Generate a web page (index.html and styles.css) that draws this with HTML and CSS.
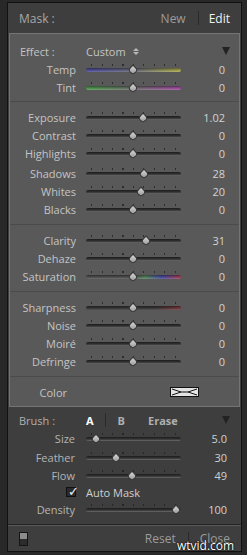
FILE: index.html
```html
<!DOCTYPE html>
<html lang="en">

<head>
    <meta charset="UTF-8">
    <meta name="viewport" content="width=device-width, initial-scale=1.0">
    <title>Mask</title>
    <link rel="stylesheet" href="styles.css">
</head>

<body>
    <div class="frame">
        <!-- 顶部 Mask 栏 -->
        <div class="head">
            <span class="head_title">Mask :</span>
            <span class="head_new">New</span>
            <span class="sep"></span>
            <span class="head_edit">Edit</span>
        </div>

        <!-- 调整面板 -->
        <div class="panel">
            <div class="group first">
                <div class="effect">
                    <span class="effect_label">Effect :</span>
                    <span class="effect_value">Custom</span>
                    <span class="updown"><i class="up"></i><i class="down"></i></span>
                    <span class="tri"></span>
                </div>
                <div class="row"><span class="lbl">Temp</span><div class="slider temp"><i class="thumb" style="left:47px"></i></div><span class="val">0</span></div>
                <div class="row"><span class="lbl">Tint</span><div class="slider tint"><i class="thumb" style="left:47px"></i></div><span class="val">0</span></div>
            </div>
            <div class="group">
                <div class="row"><span class="lbl">Exposure</span><div class="slider"><i class="thumb" style="left:57px"></i></div><span class="val">1.02</span></div>
                <div class="row"><span class="lbl">Contrast</span><div class="slider"><i class="thumb" style="left:47px"></i></div><span class="val">0</span></div>
                <div class="row"><span class="lbl">Highlights</span><div class="slider"><i class="thumb" style="left:47px"></i></div><span class="val">0</span></div>
                <div class="row gap"><span class="lbl">Shadows</span><div class="slider"><i class="thumb" style="left:58px"></i></div><span class="val">28</span></div>
                <div class="row"><span class="lbl">Whites</span><div class="slider"><i class="thumb" style="left:55px"></i></div><span class="val">20</span></div>
                <div class="row"><span class="lbl">Blacks</span><div class="slider"><i class="thumb" style="left:47px"></i></div><span class="val">0</span></div>
            </div>
            <div class="group">
                <div class="row"><span class="lbl">Clarity</span><div class="slider"><i class="thumb" style="left:60px"></i></div><span class="val">31</span></div>
                <div class="row"><span class="lbl">Dehaze</span><div class="slider"><i class="thumb" style="left:47px"></i></div><span class="val">0</span></div>
                <div class="row"><span class="lbl">Saturation</span><div class="slider sat"><i class="thumb" style="left:47px"></i></div><span class="val">0</span></div>
            </div>
            <div class="group">
                <div class="row"><span class="lbl">Sharpness</span><div class="slider sharp"><i class="thumb" style="left:47px"></i></div><span class="val">0</span></div>
                <div class="row"><span class="lbl">Noise</span><div class="slider"><i class="thumb" style="left:47px"></i></div><span class="val">0</span></div>
                <div class="row"><span class="lbl">Moiré</span><div class="slider"><i class="thumb" style="left:47px"></i></div><span class="val">0</span></div>
                <div class="row"><span class="lbl">Defringe</span><div class="slider"><i class="thumb" style="left:47px"></i></div><span class="val">0</span></div>
            </div>
            <div class="group last">
                <div class="row">
                    <span class="lbl color_lbl">Color</span>
                    <svg class="swatch" width="29" height="10" viewBox="0 0 29 10">
                        <rect x="0.5" y="0.5" width="28" height="9" fill="#e4e4e4" stroke="#111" />
                        <path d="M2 2 L11 5 L18 5 L27 2 M2 8 L11 5 M18 5 L27 8" fill="none" stroke="#111" stroke-width="1" />
                    </svg>
                </div>
            </div>
        </div>

        <!-- 画笔 -->
        <div class="brush">
            <div class="brush_head">
                <span class="brush_title">Brush :</span>
                <span class="brush_a">A</span>
                <span class="sep"></span>
                <span class="brush_b">B</span>
                <span class="brush_erase">Erase</span>
                <span class="tri"></span>
            </div>
            <div class="row"><span class="lbl">Size</span><div class="slider"><i class="thumb" style="left:10px"></i></div><span class="val">5.0</span></div>
            <div class="row feather"><span class="lbl">Feather</span><div class="slider"><i class="thumb" style="left:30px"></i></div><span class="val">30</span></div>
            <div class="row"><span class="lbl">Flow</span><div class="slider"><i class="thumb" style="left:46px"></i></div><span class="val">49</span></div>
            <div class="automask">
                <span class="check">&#10003;</span>
                <span>Auto Mask</span>
            </div>
            <div class="row"><span class="lbl">Density</span><div class="slider"><i class="thumb" style="left:90px"></i></div><span class="val">100</span></div>
        </div>

        <!-- 底部 -->
        <div class="foot">
            <span class="toggle"></span>
            <span class="foot_reset">Reset</span>
            <span class="sep"></span>
            <span class="foot_close">Close</span>
        </div>
        <div class="mark">wtvid.com</div>
    </div>
</body>

</html>
```

FILE: styles.css
```css
* {
    margin: 0;
    padding: 0;
    box-sizing: border-box;
}

body {
    background-color: #282828;
    font-family: "Open Sans", "Liberation Sans", sans-serif;
    font-size: 11px;
    color: #c4c4c4;
}

.frame {
    position: relative;
    margin: 2px 5px 0 7px;
    width: 235px;
    height: 550px;
    border: 1px solid #111;
    background-color: #3e3e3e;
}

/* 顶部 */
.head {
    display: flex;
    align-items: center;
    height: 30px;
    padding: 0 11px;
    font-size: 12px;
}

.head_title {
    color: #a8a8a8;
    flex: 1;
}

.head_new {
    color: #9c9c9c;
}

.head_edit {
    color: #f2f2f2;
}

.sep {
    width: 1px;
    height: 14px;
    margin: 0 10px 0 12px;
    background-color: #2a2a2a;
}

/* 面板 */
.panel {
    margin: 0 1px;
    border: 1px solid #747474;
    background-color: #595959;
}

.group {
    padding: 6px 0;
    border-bottom: 1px solid #4b4b4b;
}

.group.first {
    padding: 8px 0 5px;
}

.group.last {
    padding: 6px 0 5px;
    border-bottom: none;
}

.effect {
    display: flex;
    align-items: center;
    height: 18px;
    padding: 0 9px 0 10px;
}

.effect_label {
    width: 66px;
}

.effect_value {
    color: #c4c4c4;
}

.updown {
    display: flex;
    flex-direction: column;
    gap: 1px;
    margin-left: 7px;
}

.updown i {
    width: 0;
    height: 0;
    border-left: 3px solid transparent;
    border-right: 3px solid transparent;
}

.updown .up {
    border-bottom: 3px solid #b8b8b8;
}

.updown .down {
    border-top: 3px solid #b8b8b8;
}

.tri {
    margin-left: auto;
    width: 0;
    height: 0;
    border-left: 4px solid transparent;
    border-right: 4px solid transparent;
    border-top: 8px solid #222;
}

.row {
    display: flex;
    align-items: center;
    height: 18px;
}

.row.gap {
    margin-top: 2px;
}

.lbl {
    width: 66px;
    text-align: right;
}

.val {
    width: 44px;
    text-align: right;
    color: #d2d2d2;
}

/* 滑块 */
.slider {
    position: relative;
    width: 95px;
    height: 18px;
    margin-left: 10px;
}

.slider::before {
    content: "";
    position: absolute;
    left: 5px;
    top: 4px;
    width: 86px;
    height: 2px;
    background: repeating-linear-gradient(90deg, #2e2e2e 0 1px, transparent 1px 10.5px);
}

.slider::after {
    content: "";
    position: absolute;
    left: 0;
    top: 8px;
    width: 95px;
    height: 4px;
    border-radius: 2px;
    background: linear-gradient(#1c1c1c, #343434 55%, #6e6e6e);
}

.slider.temp::after {
    background: linear-gradient(rgba(0, 0, 0, .45), rgba(0, 0, 0, .1) 55%, rgba(255, 255, 255, .15)),
        linear-gradient(90deg, #5050a0, #6a6a7a 50%, #b0b050);
}

.slider.tint::after {
    background: linear-gradient(rgba(0, 0, 0, .45), rgba(0, 0, 0, .1) 55%, rgba(255, 255, 255, .15)),
        linear-gradient(90deg, #50a050, #707070 50%, #a850a8);
}

.slider.sat::after {
    background: linear-gradient(rgba(0, 0, 0, .45), rgba(0, 0, 0, .1) 55%, rgba(255, 255, 255, .15)),
        linear-gradient(90deg, #555 0 48%, #5a8a60 62%, #4a50a8 80%, #b04058);
}

.slider.sharp::after {
    background: linear-gradient(rgba(0, 0, 0, .45), rgba(0, 0, 0, .1) 55%, rgba(255, 255, 255, .15)),
        linear-gradient(90deg, #3a3a3a 0 72%, #7a3a40);
}

.thumb {
    position: absolute;
    top: 9.5px;
    z-index: 1;
    width: 8px;
    height: 8px;
    border: 1px solid #3a3a3a;
    border-radius: 0 50% 50% 50%;
    background: linear-gradient(-45deg, #959595, #d8d8d8);
    transform: translate(-50%, -50%) rotate(45deg);
}

.color_lbl {
    width: 57px;
}

.swatch {
    display: block;
    margin-left: 103px;
}

/* 画笔区 */
.brush {
    padding: 4px 0 6px;
    border-bottom: 1px solid #222;
}

.brush .lbl {
    width: 67px;
    color: #b4b4b4;
}

.brush .slider {
    margin-left: 11px;
}

.brush .slider::before {
    background: repeating-linear-gradient(90deg, #262626 0 1px, transparent 1px 10.5px);
}

.brush .val {
    width: 46px;
    color: #d0d0d0;
}

.brush_head {
    display: flex;
    align-items: center;
    height: 18px;
    padding: 0 11px;
    font-weight: bold;
    color: #b0b0b0;
}

.brush_title {
    width: 67px;
    font-weight: normal;
}

.brush_a {
    color: #fff;
}

.brush_head .sep {
    margin: 0 12px 0 11px;
}

.brush_erase {
    margin-left: 23px;
}

.row.feather {
    margin-top: 1px;
}

.automask {
    display: flex;
    align-items: center;
    height: 16px;
    padding-left: 58px;
    color: #cfcfcf;
}

.check {
    width: 10px;
    height: 10px;
    margin-right: 10px;
    border: 1px solid #111;
    background-color: #2a2a2a;
    color: #f0f0f0;
    font-size: 13px;
    line-height: 6px;
    text-indent: 1px;
}

/* 底部 */
.foot {
    display: flex;
    align-items: center;
    height: 26px;
    padding: 0 11px;
    border-top: 1px solid #5a5a5a;
    color: #9c9c9c;
    font-size: 12px;
}

.toggle {
    width: 9px;
    height: 14px;
    margin-right: auto;
    border: 1px solid #151515;
    background: linear-gradient(#8c8c8c 0 50%, #2c2c2c 50%);
}

.foot .sep {
    margin: 0 11px 0 12px;
}

.mark {
    position: absolute;
    left: 169px;
    top: 534px;
    color: #fff;
    font-size: 12px;
    text-shadow: 0 0 2px #000, 0 0 1px #000;
}
```
